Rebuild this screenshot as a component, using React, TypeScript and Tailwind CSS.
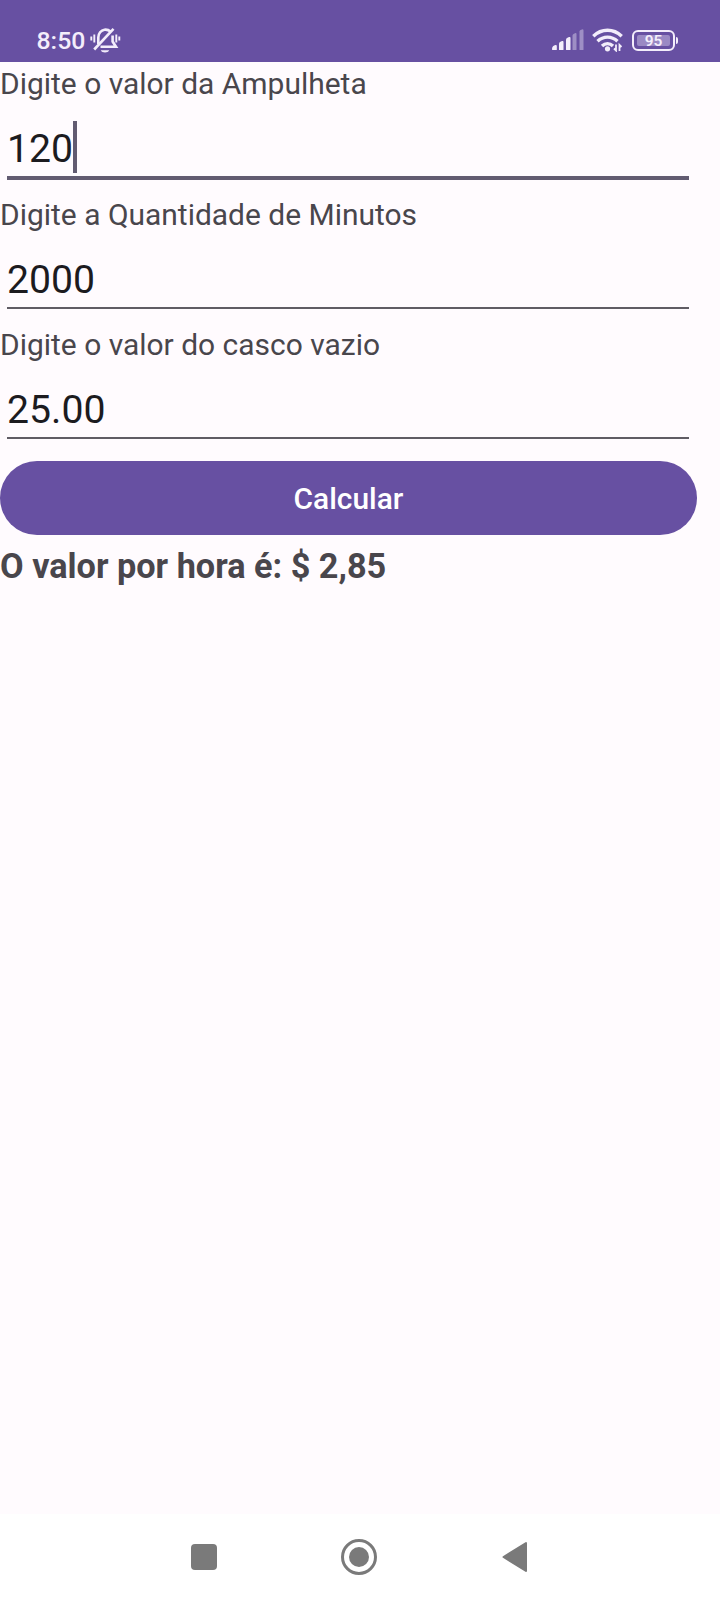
import type { ReactNode } from "react";

function StatusBar() {
  return (
    <header className="flex h-[62px] items-start justify-between bg-[#6750a2] pt-[24px] pr-[42px] pl-[36.5px] text-[#f3edfb]">
      <div className="flex items-center">
        <span className="w-[49px] text-[24.800px] leading-[34px] font-medium whitespace-nowrap">8:50</span>
        <svg className="ml-[4px] h-[28px] w-[32px]" viewBox="0 0 32 28" fill="none" stroke="currentColor" strokeWidth="2.6">
          <path d="M8.300 17V10.500C8.300 6.500 11 3.200 14.500 2.700C17.200 2.400 19 3.200 20.500 4.500" />
          <path d="M22.600 8.500V14.500L26 19.800H10.500" />
          <path d="M4.200 22.500L23.500 1.800" />
          <path d="M10.800 23.300H19.200C18.200 26.200 11.800 26.200 10.800 23.300Z" fill="currentColor" stroke="none" />
          <path d="M4.300 7.500V15.500M1.300 9.500V13.500M26.300 7.500V15.500M29.300 9.500V13.500" strokeWidth="1.900" />
        </svg>
      </div>
      <div className="flex h-[32px] items-center">
        <svg className="h-[22px] w-[32px]" viewBox="0 0 32 22" fill="currentColor">
          <path d="M0 20C0 17.500 1.500 16.500 3.500 16Q4.800 15.800 4.800 17V20.500Q4.800 21 4.300 21H.500Q0 21 0 20Z" />
          <path d="M7 14.500Q7 13.500 8 13L10 12Q11.500 11.500 11.500 13V20.500Q11.500 21 11 21H7.500Q7 21 7 20.500Z" />
          <path d="M14 10.500Q14 9.500 15 9L17 8Q18.500 7.500 18.500 9V20.500Q18.500 21 18 21H14.500Q14 21 14 20.500Z" />
          <path d="M20.500 6.500Q20.500 5.500 21.500 5L23 4.200Q24.500 3.700 24.500 5V20.500Q24.500 21 24 21H21Q20.500 21 20.500 20.500Z" opacity=".4" />
          <path d="M27.500 2.500Q27.500 1.500 28.500 1L30 .400Q31.500 0 31.500 1.500V20.500Q31.500 21 31 21H28Q27.500 21 27.500 20.500Z" opacity=".4" />
        </svg>
        <svg className="ml-[8px] h-[24px] w-[32px]" viewBox="0 0 32 24" fill="none" stroke="currentColor" strokeWidth="3.400">
          <path d="M1.300 8.200C9.500 .2 21.500 .2 29.700 8.200M5.500 13.200C11.500 7.700 19.500 7.700 25.500 13.200M10 18C13.300 14.800 17.700 14.800 21 18" />
          <circle cx="15.500" cy="20.800" r="2.600" fill="currentColor" stroke="none" />
          <path d="M24 16.500V22.500L22 20.500M27.500 23V17L29.500 19" strokeWidth="1.800" />
        </svg>
        <div className="ml-[8.500px] flex h-[21px] w-[43px] items-center justify-center rounded-[6px] border-2 border-current p-[3px]">
          <div className="flex h-full w-full items-center justify-center rounded-[2px] bg-[#9a89c4] pt-[3px] text-[15.500px] leading-none font-semibold">95</div>
        </div>
        <div className="ml-px h-[7px] w-[2px] rounded-r-sm bg-current" />
      </div>
    </header>
  );
}

function Field({ label, children, focused = false }: { label: string; children: ReactNode; focused?: boolean }) {
  return (
    <div className="flex h-[130.5px] flex-col">
      <label className="h-[44px] text-[29.960px] leading-[44px] whitespace-nowrap text-[#49464c]">{label}</label>
      <div className="ml-[7px] flex h-[74px] w-[682px] flex-col justify-end">
        <div className="flex h-[52px] items-center text-[39.200px] leading-[52px] text-[#1c1b1f]">
          <span className="translate-y-[2px]">{children}</span>
          {focused && <span className="h-[52px] w-[4px] bg-[#625b71]" />}
        </div>
        <div className="mt-[3px] flex h-[4px] items-start">
          <div className={focused ? "h-[4px] w-full bg-[#625b71]" : "h-[2px] w-full bg-[#605c64]"} />
        </div>
      </div>
    </div>
  );
}

function NavigationBar() {
  return (
    <nav className="flex h-[86px] items-center bg-white pl-[191px] text-[#7a7a7a]">
      <div className="h-[26px] w-[26px] rounded-[4px] bg-current" />
      <div className="ml-[124px] flex h-[36px] w-[36px] items-center justify-center rounded-full border-[3px] border-current">
        <div className="h-[20px] w-[20px] rounded-full bg-current" />
      </div>
      <svg className="ml-[124px] h-[32px] w-[26px]" viewBox="0 0 26 32" fill="currentColor" stroke="currentColor" strokeWidth="2" strokeLinejoin="round">
        <path d="M2.500 16L25 2V30Z" />
      </svg>
    </nav>
  );
}

export default function App() {
  return (
    <div className="flex h-[1600px] w-[720px] flex-col overflow-hidden bg-[#fffbfe] font-['Roboto',sans-serif]">
      <StatusBar />
      <main className="flex flex-1 flex-col">
        <Field label="Digite o valor da Ampulheta" focused>120</Field>
        <Field label="Digite a Quantidade de Minutos">2000</Field>
        <Field label="Digite o valor do casco vazio">25.00</Field>
        <button className="mt-[7.500px] h-[73.500px] w-[697px] rounded-full bg-[#6750a2] pt-[2px] text-[29.900px] leading-[70px] font-medium text-white">Calcular</button>
        <p className="h-[63px] text-[34.250px] leading-[63px] font-bold whitespace-nowrap text-[#49464c]">O valor por hora é: $ 2,85</p>
      </main>
      <NavigationBar />
    </div>
  );
}
